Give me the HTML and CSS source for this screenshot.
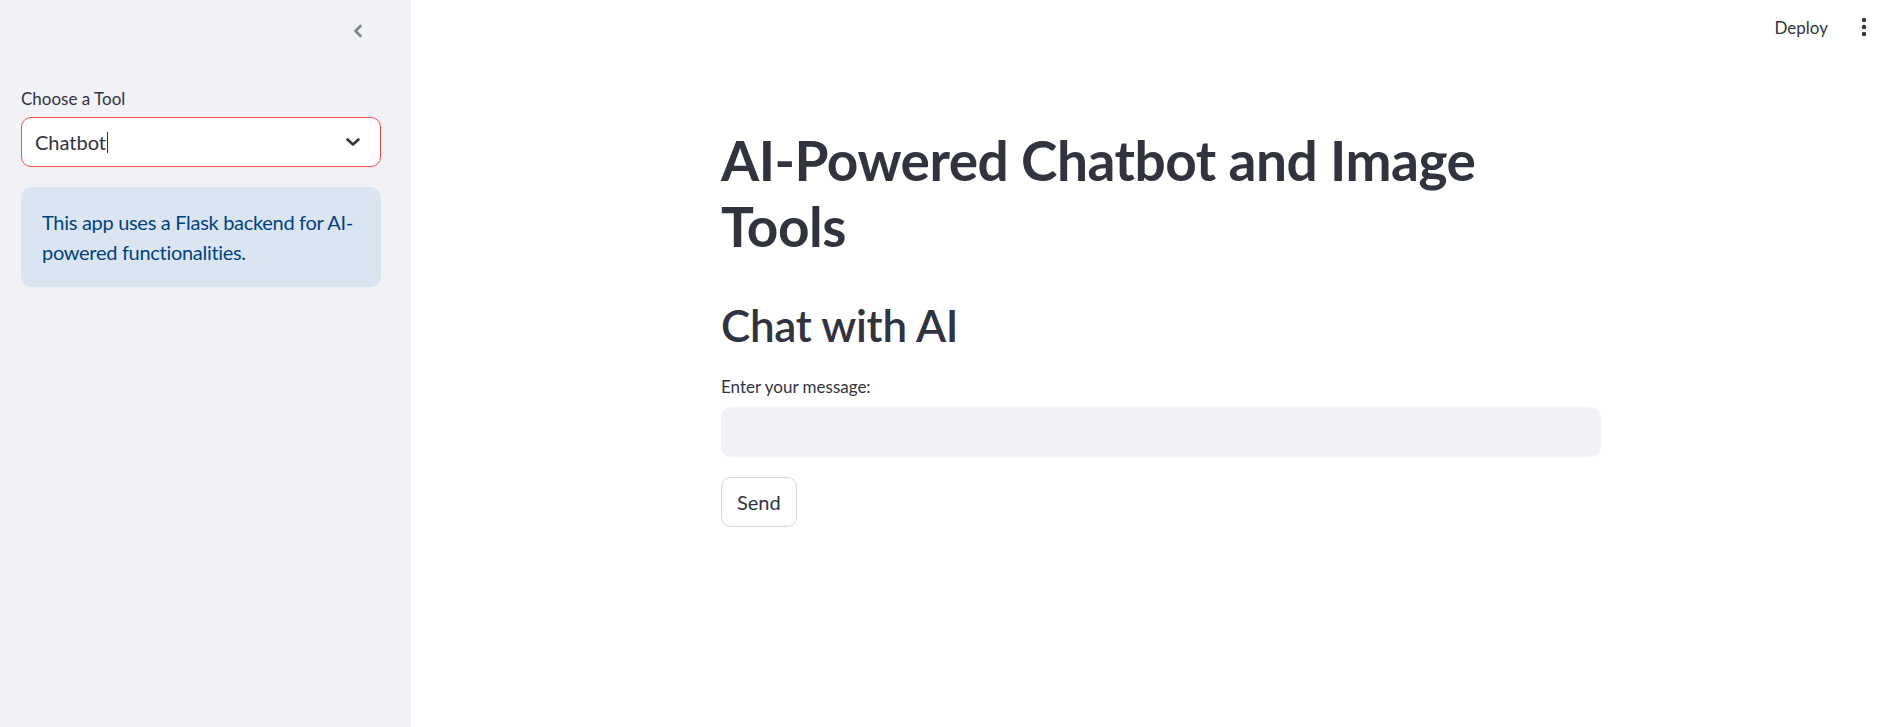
FILE: index.html
```html
<!DOCTYPE html>
<html lang="en">
<head>
<meta charset="utf-8">
<title>AI-Powered Chatbot and Image Tools</title>
<link rel="stylesheet" href="styles.css">
</head>
<body>
<div class="app">
  <aside class="sidebar">
    <div class="sidebar-top">
      <button class="collapse" aria-label="Collapse sidebar">
        <svg width="16" height="16" viewBox="0 0 16 16"><path d="M10.5 3 L5.5 8 L10.5 13" fill="none" stroke="#808495" stroke-width="2.6" stroke-linecap="round" stroke-linejoin="round"/></svg>
      </button>
    </div>
    <div class="sidebar-content">
      <label class="field-label">Choose a Tool</label>
      <div class="select">
        <span class="select-value">Chatbot<span class="caret"></span></span>
        <svg class="select-arrow" width="16" height="10" viewBox="0 0 16 10"><path d="M2.5 2.5 L8 7.5 L13.5 2.5" fill="none" stroke="#31333F" stroke-width="2.6" stroke-linecap="round" stroke-linejoin="round"/></svg>
      </div>
      <div class="info">This app uses a Flask backend for AI-powered functionalities.</div>
    </div>
  </aside>
  <main class="main">
    <header class="topbar">
      <span class="deploy">Deploy</span>
      <svg class="menu" width="6" height="20" viewBox="0 0 6 20"><circle cx="3" cy="3" r="2.2" fill="#31333F"/><circle cx="3" cy="10" r="2.2" fill="#31333F"/><circle cx="3" cy="17" r="2.2" fill="#31333F"/></svg>
    </header>
    <div class="block">
      <h1 class="title">AI-Powered Chatbot and Image Tools</h1>
      <h2 class="subtitle">Chat with AI</h2>
      <label class="field-label main-label">Enter your message:</label>
      <div class="text-input"></div>
      <button class="send">Send</button>
    </div>
  </main>
</div>
</body>
</html>
```
FILE: styles.css
```css
* { box-sizing: border-box; }
html, body { margin: 0; padding: 0; height: 100%; }
body {
  font-family: "Lato", "Open Sans", sans-serif;
  color: #31333F;
  background: #ffffff;
  overflow: hidden;
}
.app { display: flex; height: 727px; }

.sidebar {
  width: 411px;
  flex: 0 0 411px;
  background: #F0F2F6;
  display: flex;
  flex-direction: column;
}
.sidebar-top {
  height: 80px;
  display: flex;
  justify-content: flex-end;
  align-items: flex-start;
  padding: 23px 45px 0 0;
}
.collapse {
  border: 0;
  background: transparent;
  padding: 0;
  width: 16px;
  height: 16px;
  display: flex;
}
.sidebar-content {
  padding: 7px 30px 0 21px;
  display: flex;
  flex-direction: column;
}
.field-label {
  font-size: 17px;
  line-height: 24px;
  color: #31333F;
  margin-bottom: 6px;
}
.select {
  height: 50px;
  background: #ffffff;
  border: 1px solid #FF4B4B;
  border-radius: 10px;
  display: flex;
  align-items: center;
  justify-content: space-between;
  padding: 0 19px 0 13px;
}
.select-value {
  font-size: 20px;
  display: flex;
  align-items: center;
}
.caret {
  display: inline-block;
  width: 1px;
  height: 21px;
  background: #31333F;
  margin-left: 1px;
}
.select-arrow { display: block; }
.info {
  margin-top: 20px;
  background: #DBE5F1;
  color: #004280;
  border-radius: 10px;
  padding: 20px 18px 20px 21px;
  font-size: 20px;
  line-height: 30px;
  letter-spacing: -0.3px;
}

.main {
  flex: 1;
  display: flex;
  flex-direction: column;
  align-items: center;
  padding-left: 11px;
}
.topbar {
  align-self: stretch;
  height: 56px;
  display: flex;
  justify-content: flex-end;
  align-items: center;
  padding-right: 33px;
}
.deploy {
  font-size: 17px;
  color: #31333F;
  margin-right: 33px;
  margin-top: -2px;
}
.menu { display: block; margin-top: -2px; }

.block {
  width: 880px;
  padding-top: 71px;
  display: flex;
  flex-direction: column;
  align-items: flex-start;
}
.title {
  margin: 0;
  font-size: 55px;
  font-weight: 700;
  line-height: 66px;
  color: #31333F;
  letter-spacing: -0.5px;
}
.subtitle {
  margin: 39px 0 0 0;
  font-size: 44px;
  font-weight: 600;
  line-height: 54px;
  color: #31333F;
  letter-spacing: -0.3px;
}
.main-label { margin-top: 23px; margin-bottom: 8px; }
.text-input {
  align-self: stretch;
  height: 50px;
  background: #F0F2F6;
  border-radius: 10px;
}
.send {
  margin-top: 20px;
  height: 50px;
  padding: 0 15px;
  background: #ffffff;
  border: 1px solid #D5D6DA;
  border-radius: 10px;
  font-family: inherit;
  font-size: 20px;
  color: #31333F;
}
```
